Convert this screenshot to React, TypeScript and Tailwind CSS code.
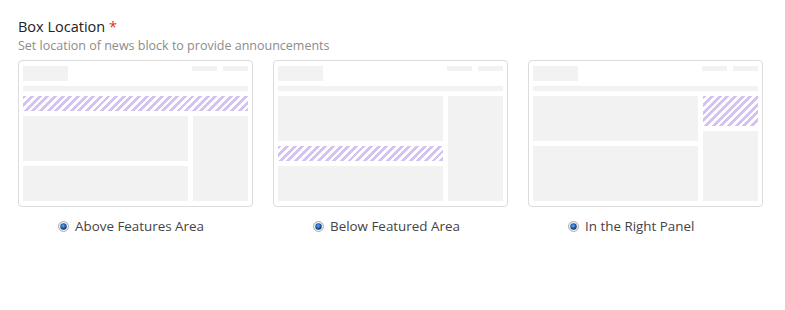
const stripes =
  "bg-[repeating-linear-gradient(135deg,#d3c2f2_0_2.8px,#ffffff_2.8px_5.4px)]";

function Radio() {
  return (
    <svg width="11" height="11" viewBox="0 0 11 11" className="shrink-0">
      <defs>
        <radialGradient id="dot" cx="0.45" cy="0.4" r="0.6">
          <stop offset="0" stopColor="#6fb0f0" />
          <stop offset="0.55" stopColor="#1f64b8" />
          <stop offset="1" stopColor="#10284d" />
        </radialGradient>
      </defs>
      <circle cx="5.5" cy="5.5" r="5" fill="#eef0f2" stroke="#a9adb3" strokeWidth="1" />
      <circle cx="5.5" cy="5.5" r="3.2" fill="url(#dot)" />
    </svg>
  );
}

function Header() {
  return (
    <>
      <div className="flex h-[15px] justify-between">
        <div className="w-[45px] bg-[#f2f2f2]" />
        <div className="flex gap-[6px]">
          <div className="h-[5px] w-[25px] bg-[#f2f2f2]" />
          <div className="h-[5px] w-[25px] bg-[#f2f2f2]" />
        </div>
      </div>
      <div className="h-[5px] bg-[#f2f2f2]" />
    </>
  );
}

function Block({ h, striped }: { h: string; striped?: boolean }) {
  return <div className={`${h} ${striped ? stripes : "bg-[#f2f2f2]"}`} />;
}

function Preview({ variant }: { variant: "above" | "below" | "right" }) {
  return (
    <div className="flex h-[147px] w-[235px] flex-col gap-[5px] rounded-[4px] border border-[#dcdcdc] bg-white px-[4px] py-[5px]">
      <Header />
      {variant === "above" && <div className={`h-[15px] ${stripes}`} />}
      <div className="flex flex-1 gap-[5px]">
        <div className="flex w-[165px] flex-col gap-[5px]">
          {variant === "below" ? (
            <>
              <Block h="h-[45px]" />
              <Block h="h-[15px]" striped />
              <Block h="flex-1" />
            </>
          ) : (
            <>
              <Block h="h-[45px]" />
              <Block h="flex-1" />
            </>
          )}
        </div>
        <div className="flex flex-1 flex-col gap-[5px]">
          {variant === "right" && <Block h="h-[30px]" striped />}
          <Block h="flex-1" />
        </div>
      </div>
    </div>
  );
}

const options = [
  { variant: "above" as const, label: "Above Features Area" },
  { variant: "below" as const, label: "Below Featured Area" },
  { variant: "right" as const, label: "In the Right Panel" },
];

export default function App() {
  return (
    <div className="h-[310px] w-[785px] bg-white px-[18px] pt-[17px] font-['Open_Sans',sans-serif]">
      <div className="text-[14.5px] leading-[20px] text-[#222]">
        Box Location <span className="text-[#e0302a]">*</span>
      </div>
      <div className="text-[12.5px] leading-[17px] text-[#8c8c8c]">
        Set location of news block to provide announcements
      </div>
      <div className="mt-[6px] flex gap-[20px]">
        {options.map((o) => (
          <div key={o.variant} className="flex w-[235px] flex-col">
            <Preview variant={o.variant} />
            <label className="mt-[11px] ml-[40px] flex items-center gap-[6px] text-[13.4px] leading-[16px] text-[#444]">
              <Radio />
              {o.label}
            </label>
          </div>
        ))}
      </div>
    </div>
  );
}
